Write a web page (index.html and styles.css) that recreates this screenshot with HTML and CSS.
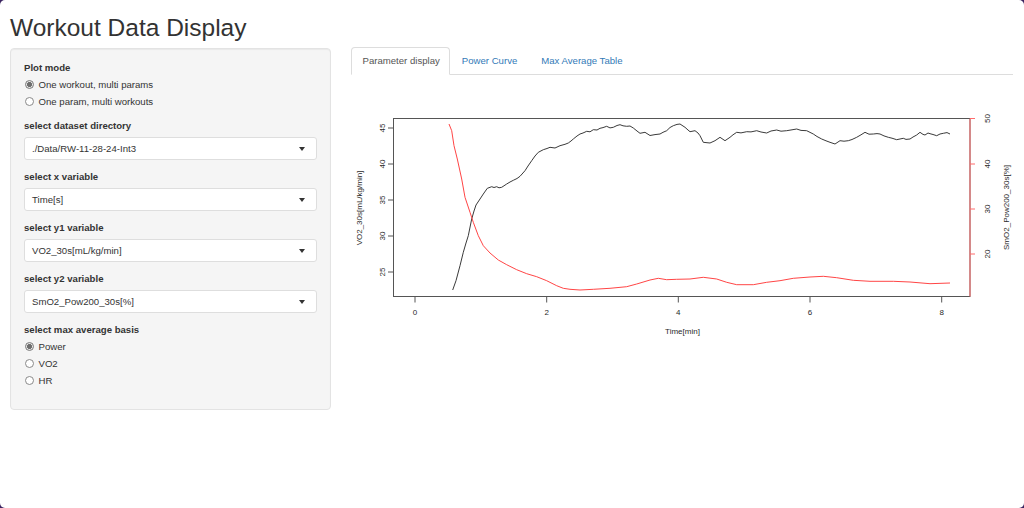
FILE: index.html
```html
<!DOCTYPE html>
<html>
<head>
<meta charset="utf-8">
<title>Workout Data Display</title>
<link rel="stylesheet" href="styles.css">
</head>
<body>
<div class="app">
  <h2 class="title">Workout Data Display</h2>
  <div class="layout">
    <aside class="well">
      <div class="group group-radio">
        <div class="label">Plot mode</div>
        <div class="radio"><span class="dot on"></span>One workout, multi params</div>
        <div class="radio"><span class="dot"></span>One param, multi workouts</div>
      </div>
      <div class="group">
        <div class="label lbl-select">select dataset directory</div>
        <div class="select"><span>./Data/RW-11-28-24-Int3</span><span class="caret"></span></div>
      </div>
      <div class="group">
        <div class="label lbl-select">select x variable</div>
        <div class="select"><span>Time[s]</span><span class="caret"></span></div>
      </div>
      <div class="group">
        <div class="label lbl-select">select y1 variable</div>
        <div class="select"><span>VO2_30s[mL/kg/min]</span><span class="caret"></span></div>
      </div>
      <div class="group">
        <div class="label lbl-select">select y2 variable</div>
        <div class="select"><span>SmO2_Pow200_30s[%]</span><span class="caret"></span></div>
      </div>
      <div class="group group-last">
        <div class="label">select max average basis</div>
        <div class="radio"><span class="dot on"></span>Power</div>
        <div class="radio"><span class="dot"></span>VO2</div>
        <div class="radio"><span class="dot"></span>HR</div>
      </div>
    </aside>
    <main class="main">
      <nav class="tabs">
        <a class="tab active">Parameter display</a>
        <a class="tab">Power Curve</a>
        <a class="tab">Max Average Table</a>
      </nav>
      <svg class="plot" width="662" height="290" viewBox="351 76 662 290" xmlns="http://www.w3.org/2000/svg">
        <rect x="393.5" y="119.5" width="576.5" height="178" fill="none" stroke="#555" stroke-width="1"/>
        <g stroke="#555" stroke-width="1">
          <line x1="388" y1="129" x2="393.5" y2="129"/>
          <line x1="388" y1="165" x2="393.5" y2="165"/>
          <line x1="388" y1="201" x2="393.5" y2="201"/>
          <line x1="388" y1="237" x2="393.5" y2="237"/>
          <line x1="388" y1="273" x2="393.5" y2="273"/>
          <line x1="415" y1="297.5" x2="415" y2="303.5"/>
          <line x1="546.7" y1="297.5" x2="546.7" y2="303.5"/>
          <line x1="678.3" y1="297.5" x2="678.3" y2="303.5"/>
          <line x1="810" y1="297.5" x2="810" y2="303.5"/>
          <line x1="941.7" y1="297.5" x2="941.7" y2="303.5"/>
        </g>
        <g stroke="#ff6b6b" stroke-width="1">
          <line x1="970" y1="119.5" x2="970" y2="297.5"/>
          <line x1="970" y1="119.5" x2="975" y2="119.5"/>
          <line x1="970" y1="165" x2="975" y2="165"/>
          <line x1="970" y1="210" x2="975" y2="210"/>
          <line x1="970" y1="255" x2="975" y2="255"/>
        </g>
        <g class="ax">
          <text x="382" y="129" transform="rotate(-90 382 129)">45</text>
          <text x="382" y="165" transform="rotate(-90 382 165)">40</text>
          <text x="382" y="201" transform="rotate(-90 382 201)">35</text>
          <text x="382" y="237" transform="rotate(-90 382 237)">30</text>
          <text x="382" y="273" transform="rotate(-90 382 273)">25</text>
          <text x="987" y="119.5" transform="rotate(-90 987 119.5)">50</text>
          <text x="987" y="165" transform="rotate(-90 987 165)">40</text>
          <text x="987" y="210" transform="rotate(-90 987 210)">30</text>
          <text x="987" y="255" transform="rotate(-90 987 255)">20</text>
          <text x="415" y="313.5">0</text>
          <text x="546.7" y="313.5">2</text>
          <text x="678.3" y="313.5">4</text>
          <text x="810" y="313.5">6</text>
          <text x="941.7" y="313.5">8</text>
          <text x="682.5" y="332.5">Time[min]</text>
          <text x="359.5" y="209" transform="rotate(-90 359.5 209)">VO2_30s[mL/kg/min]</text>
          <text x="1006.5" y="208.5" transform="rotate(-90 1006.5 208.5)">SmO2_Pow200_30s[%]</text>
        </g>
        <polyline fill="none" stroke="#3a3a3a" stroke-width="1" stroke-linejoin="round" points="452.7,291 456,281.7 460,266.7 463.3,253.3 466,244 468.3,236.7 471.7,220 474,212 476,206 478,203 480,200 483.3,195 487.3,189.3 491.7,187.7 494,188.5 496.7,187.7 499,188.8 501.7,188.3 506.7,185 510,183 513.3,181.3 517,179.5 520,177.3 525,171.7 528,167 531.7,161.7 535,157 538.3,153.3 543.3,150.7 547,149.5 550,148.3 555,149 560,146.7 565,145.3 568.3,144 571,142 573.3,140 577,137 580,135 583,134 586.7,132.3 590,132.8 593.3,130.7 597,131 600,129.3 603,128.6 606.7,127.3 610,128.9 613.3,128.3 617,126.5 620,125.7 623,126.8 626.7,127.3 630,127 633.3,129 637,132 640,134.3 645,133.3 650,136.5 655,135.6 660,135 663,133.3 666.7,131.7 670,128.5 673.3,126.7 677,125.4 680,125 685,128.3 688,131 690,132.7 695,131.7 698,134 700,136.7 703.3,143.3 706,143.6 710,144 715,141.7 720,138.3 725,141.7 730,138.3 733,135.8 736.7,133.3 741,133.9 746.7,132.7 751,132.9 756.7,131.7 761,133 766.7,134 771,132 776.7,131 781,132.2 786.7,131.7 792,130.8 796.7,130 801,131.4 806.7,131.7 813.3,135 817,137.5 821.7,140 826,141.8 830,143.3 835,145 840,141.7 844,142.2 848.3,141.7 852,140.5 856.7,138.3 861,135.8 865,133.3 869,135.2 873.3,135 877,134.6 880,135 884,136.9 888.3,138.3 892,139.2 896.7,140.7 903.3,139.3 906,140.4 910,140 913,138 916.7,136 920,133.3 923,135.4 925,136 928,134 930,134.7 933,135.5 936.7,136.7 940,135 943.3,134.3 947,133.6 950,135"/>
        <polyline fill="none" stroke="#ff4545" stroke-width="1" stroke-linejoin="round" points="449,125 451.7,131.7 454,146.7 457.3,160 461.7,180 465,198.3 470,213.3 473.3,223.3 478.3,236.7 483.3,246.7 490,254 498.3,261 506.7,265.7 516.7,270.7 526.7,274.7 536.7,277.7 546.7,281.7 556.7,286.7 563.3,289.3 570,290.3 580,291 593.3,290.3 610,289.3 626.7,287.7 636.7,285 645,282.5 650,281 658.3,279.3 666.7,280.7 676.7,280.3 690,280 703.3,278.3 716.7,280 726.7,283.3 736.7,285.7 753.3,285.7 766.7,283.3 780,281.7 793.3,279.3 810,278 823.3,277.3 836.7,278.7 853.3,281.3 870,282.3 893.3,282.3 910,283 930,284.7 950,284"/>
      </svg>
    </main>
  </div>
</div>
</body>
</html>
```

FILE: styles.css
```css
html {
  background: #3b2460;
}
body {
  margin: 0;
  background: #ffffff;
  border-radius: 5px;
  min-height: 508px;
  font-family: "Liberation Sans", Arial, sans-serif;
  color: #333333;
}
.app {
  padding: 0 11px 0 10px;
}
.title {
  margin: 14px 0 7px 0;
  font-size: 24.5px;
  line-height: 27px;
  font-weight: 400;
  color: #333333;
}
.layout {
  display: flex;
  gap: 20px;
  align-items: flex-start;
}
.well {
  flex: 0 0 321px;
  box-sizing: border-box;
  background: #f5f5f5;
  border: 1px solid #e3e3e3;
  border-radius: 4px;
  box-shadow: inset 0 1px 1px rgba(0, 0, 0, 0.05);
  padding: 11px 13px 20px 13px;
  font-size: 9.6px;
}
.group {
  margin-bottom: 9px;
}
.group-radio {
  margin-bottom: 8px;
}
.group-last {
  margin-bottom: 0;
}
.label {
  font-weight: 700;
  line-height: 16px;
  color: #333333;
}
.lbl-select {
  margin-bottom: 3px;
}
.radio {
  display: flex;
  align-items: center;
  height: 17px;
  line-height: 17px;
  color: #333333;
}
.dot {
  box-sizing: border-box;
  width: 9px;
  height: 9px;
  border: 1px solid #8a8a8a;
  border-radius: 50%;
  background: #ffffff;
  margin: 0 5px 0 0.5px;
  flex: 0 0 9px;
}
.dot.on {
  background: radial-gradient(circle, #6d6d6d 0, #6d6d6d 2.2px, #e6e6e6 2.8px);
  border-color: #7a7a7a;
}
.select {
  box-sizing: border-box;
  height: 23px;
  display: flex;
  align-items: center;
  justify-content: space-between;
  background: #ffffff;
  border: 1px solid #dedede;
  border-radius: 3px;
  padding: 0 11px 0 7px;
  color: #333333;
}
.caret {
  width: 0;
  height: 0;
  border-top: 4px solid #333333;
  border-left: 3.5px solid transparent;
  border-right: 3.5px solid transparent;
}
.main {
  flex: 1 1 auto;
  margin-top: -1px;
  min-width: 0;
}
.tabs {
  display: flex;
  border-bottom: 1px solid #dddddd;
  font-size: 9.6px;
}
.tab {
  display: block;
  padding: 5px 11px;
  line-height: 16px;
  border: 1px solid transparent;
  border-radius: 4px 4px 0 0;
  color: #337ab7;
  margin: 0 0 -1px 0;
}
.tab.active {
  color: #555555;
  background: #ffffff;
  border-color: #dddddd #dddddd transparent #dddddd;
  padding-left: 10.5px;
  padding-right: 9px;
}
.plot {
  display: block;
}
.ax text {
  font-family: "Liberation Sans", Arial, sans-serif;
  font-size: 8px;
  fill: #2a2a2a;
  text-anchor: middle;
  dominant-baseline: central;
}
```
